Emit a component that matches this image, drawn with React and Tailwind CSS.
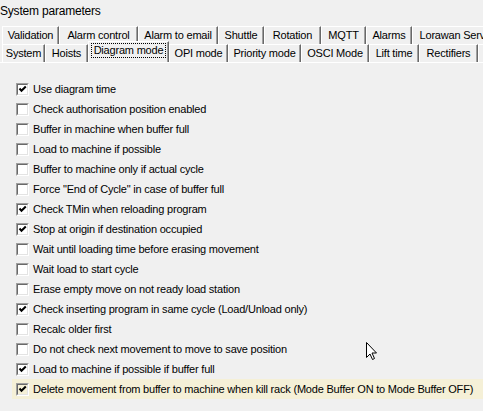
import React from 'react'

const row1 = [
  ['Validation', 57],
  ['Alarm control', 79],
  ['Alarm to email', 80],
  ['Shuttle', 46],
  ['Rotation', 57],
  ['MQTT', 45],
  ['Alarms', 46],
  ['Lorawan Server', 90],
]

const row2 = [
  ['System', 43],
  ['Hoists', 43],
  ['Diagram mode', 81, true],
  ['OPI mode', 59],
  ['Priority mode', 73],
  ['OSCI Mode', 68],
  ['Lift time', 50],
  ['Rectifiers', 59],
  ['', 60],
]

const options = [
  ['Use diagram time', true],
  ['Check authorisation position enabled', false],
  ['Buffer in machine when buffer full', false],
  ['Load to machine if possible', false],
  ['Buffer to machine only if actual cycle', false],
  ['Force "End of Cycle" in case of buffer full', false],
  ['Check TMin when reloading program', true],
  ['Stop at origin if destination occupied', true],
  ['Wait until loading time before erasing movement', false],
  ['Wait load to start cycle', false],
  ['Erase empty move on not ready load station', false],
  ['Check inserting program in same cycle (Load/Unload only)', true],
  ['Recalc older first', false],
  ['Do not check next movement to move to save position', false],
  ['Load to machine if possible if buffer full', true],
  ['Delete movement from buffer to machine when kill rack (Mode Buffer ON to Mode Buffer OFF)', true],
]

function Tab({ label, width, selected }) {
  if (selected) {
    return (
      <div
        style={{ width }}
        className="relative z-10 -mt-[2px] h-[21px] shrink-0 border-l border-t border-white border-r border-r-[#696969] bg-[#f0f0f0] shadow-[inset_-1px_0_#a0a0a0] px-[2px] pt-[1px]"
      >
        <div className="h-[15px] border border-dotted border-black flex items-center justify-center leading-none">
          {label}
        </div>
      </div>
    )
  }
  return (
    <div
      style={{ width }}
      className="h-[18px] shrink-0 border-l border-t border-white border-r border-r-[#696969] shadow-[inset_-1px_0_#a0a0a0] flex items-center justify-center leading-none whitespace-nowrap overflow-hidden"
    >
      {label}
    </div>
  )
}

function Checkbox({ checked, tint }) {
  return (
    <div className="w-[13px] h-[13px] shrink-0 border border-t-[#a0a0a0] border-l-[#a0a0a0] border-b-white border-r-white">
      <div
        className={
          'w-full h-full border border-t-[#696969] border-l-[#696969] border-b-[#e3e3e3] border-r-[#e3e3e3] flex items-center justify-center ' +
          (tint ? 'bg-[#f5f0d7]' : 'bg-white')
        }
      >
        {checked && (
          <svg width="9" height="9" viewBox="0 0 9 9">
            <path d="M1.5 3.5 L3.5 5.8 L7.8 1.5" fill="none" stroke="black" strokeWidth="2" />
          </svg>
        )}
      </div>
    </div>
  )
}

export default function App() {
  return (
    <div
      className="relative w-[483px] h-[411px] overflow-hidden bg-[#f0f0f0] text-black text-[11px] tracking-[-0.2px]"
      style={{ fontFamily: '"Liberation Sans", Arial, sans-serif' }}
    >
      <div className="h-[26px] pt-[4px] text-[12px] leading-[14px]">System parameters</div>

      <div className="flex pl-[2px] h-[18px]">
        {row1.map(([label, w]) => (
          <Tab key={label} label={label} width={w} />
        ))}
      </div>

      <div className="flex items-end pl-[2px] h-[18px]">
        {row2.map(([label, w, sel], i) => (
          <Tab key={i} label={label} width={w} selected={sel} />
        ))}
      </div>

      <div className="border-t border-white pt-[16px]">
        {options.map(([label, checked], i) => {
          const last = i === options.length - 1
          return (
            <div
              key={label}
              className={
                'ml-[12px] h-[20px] flex items-center gap-[4px] pl-[4px] whitespace-nowrap ' +
                (last ? 'bg-[#f5f0d7]' : '')
              }
            >
              <Checkbox checked={checked} tint={last} />
              <span>{label}</span>
            </div>
          )
        })}
      </div>

      <svg className="absolute left-[366px] top-[342px]" width="12" height="19" viewBox="0 0 12 19">
        <path
          d="M0.5 0.5 L0.5 15.5 L4 12 L6.5 17.5 L8.5 16.5 L6 11 L10.5 11 Z"
          fill="white"
          stroke="black"
          strokeWidth="1"
          strokeLinejoin="miter"
        />
      </svg>
    </div>
  )
}
